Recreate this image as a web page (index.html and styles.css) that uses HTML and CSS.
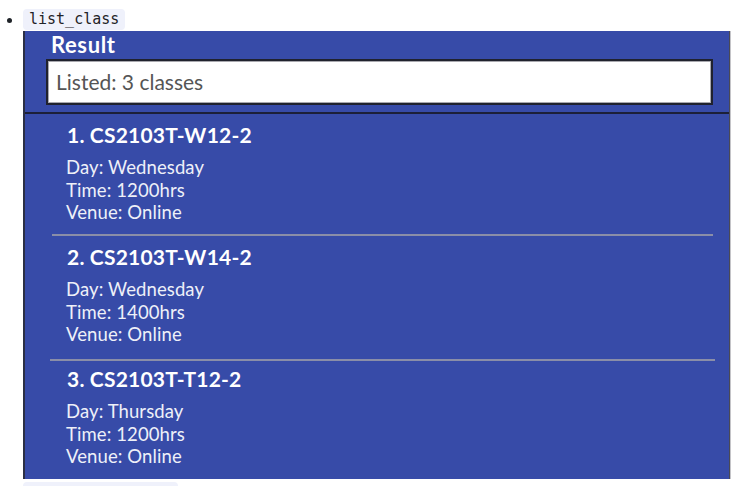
FILE: index.html
```html
<!DOCTYPE html>
<html>
<head>
<meta charset="utf-8">
<link rel="stylesheet" href="styles.css">
</head>
<body>
<ul class="doc-list">
  <li class="doc-item">
    <code class="cmd">list_class</code>
    <div class="shot">
      <div class="result">
        <div class="result-title">Result</div>
        <div class="result-box">Listed: 3 classes</div>
      </div>
      <div class="cards">
        <div class="card">
          <div class="card-title">1. CS2103T-W12-2</div>
          <div class="card-line">Day: Wednesday</div>
          <div class="card-line">Time: 1200hrs</div>
          <div class="card-line">Venue: Online</div>
        </div>
        <div class="sep"></div>
        <div class="card">
          <div class="card-title">2. CS2103T-W14-2</div>
          <div class="card-line">Day: Wednesday</div>
          <div class="card-line">Time: 1400hrs</div>
          <div class="card-line">Venue: Online</div>
        </div>
        <div class="sep sep-low"></div>
        <div class="card card-after-low">
          <div class="card-title">3. CS2103T-T12-2</div>
          <div class="card-line">Day: Thursday</div>
          <div class="card-line">Time: 1200hrs</div>
          <div class="card-line">Venue: Online</div>
        </div>
      </div>
    </div>
  </li>
  <li class="doc-item">
    <code class="cmd">&nbsp;</code>
  </li>
</ul>
</body>
</html>
```
FILE: styles.css
```css
html, body {
  margin: 0;
  padding: 0;
  background: #ffffff;
}
body {
  font-family: "Liberation Sans", Arial, sans-serif;
  color: #1f2328;
}
.doc-list {
  margin: 0;
  padding: 9px 0 0 23px;
  list-style: disc;
}
.doc-item {
  font-size: 16px;
  line-height: 21px;
}
.doc-item + .doc-item {
  margin-top: 3px;
}
.cmd {
  display: inline-block;
  font-family: "DejaVu Sans Mono", monospace;
  font-size: 15px;
  line-height: 21px;
  padding: 0 6px;
  background: #eff1fb;
  border-radius: 4px;
  color: #1f2328;
  vertical-align: top;
}
.doc-item:last-child .cmd {
  width: 143px;
}
.shot {
  width: 704px;
  height: 448px;
  margin-top: 1px;
  background: #374ba8;
  border-left: 2px solid #2b2f45;
  border-right: 1px solid #4a4a55;
  box-shadow: 1px 0 0 #c4c4c8;
  overflow: hidden;
  display: flex;
  flex-direction: column;
  font-family: Lato, "Open Sans", sans-serif;
  color: #ffffff;
}
.result {
  padding: 2px 16px 7px 21px;
  border-bottom: 2px solid #1c2038;
}
.result-title {
  font-weight: 700;
  font-size: 22px;
  letter-spacing: 0.6px;
  line-height: 24px;
  padding-left: 5px;
  margin-bottom: 2px;
}
.result-box {
  height: 42px;
  background: #ffffff;
  border: 2px solid #20222e;
  box-shadow: inset 0 0 0 1px #a8a8ae;
  color: #555555;
  font-size: 21px;
  line-height: 42px;
  padding-left: 8px;
}
.cards {
  display: flex;
  flex-direction: column;
}
.card {
  padding: 8px 16px 10.5px 41px;
}
.card-after-low {
  padding-top: 5px;
}
.card-title {
  font-weight: 700;
  font-size: 21px;
  letter-spacing: 0.2px;
  line-height: 26px;
  margin-bottom: 8px;
  padding-left: 1px;
}
.card-line {
  font-size: 18.5px;
  letter-spacing: 0.1px;
  line-height: 22.5px;
  color: #eef0f8;
}
.sep {
  height: 2px;
  margin: 0 16px 0 27px;
  background: #8a8ea8;
}
.sep-low {
  margin: 3px 14px 0 25px;
}
```
